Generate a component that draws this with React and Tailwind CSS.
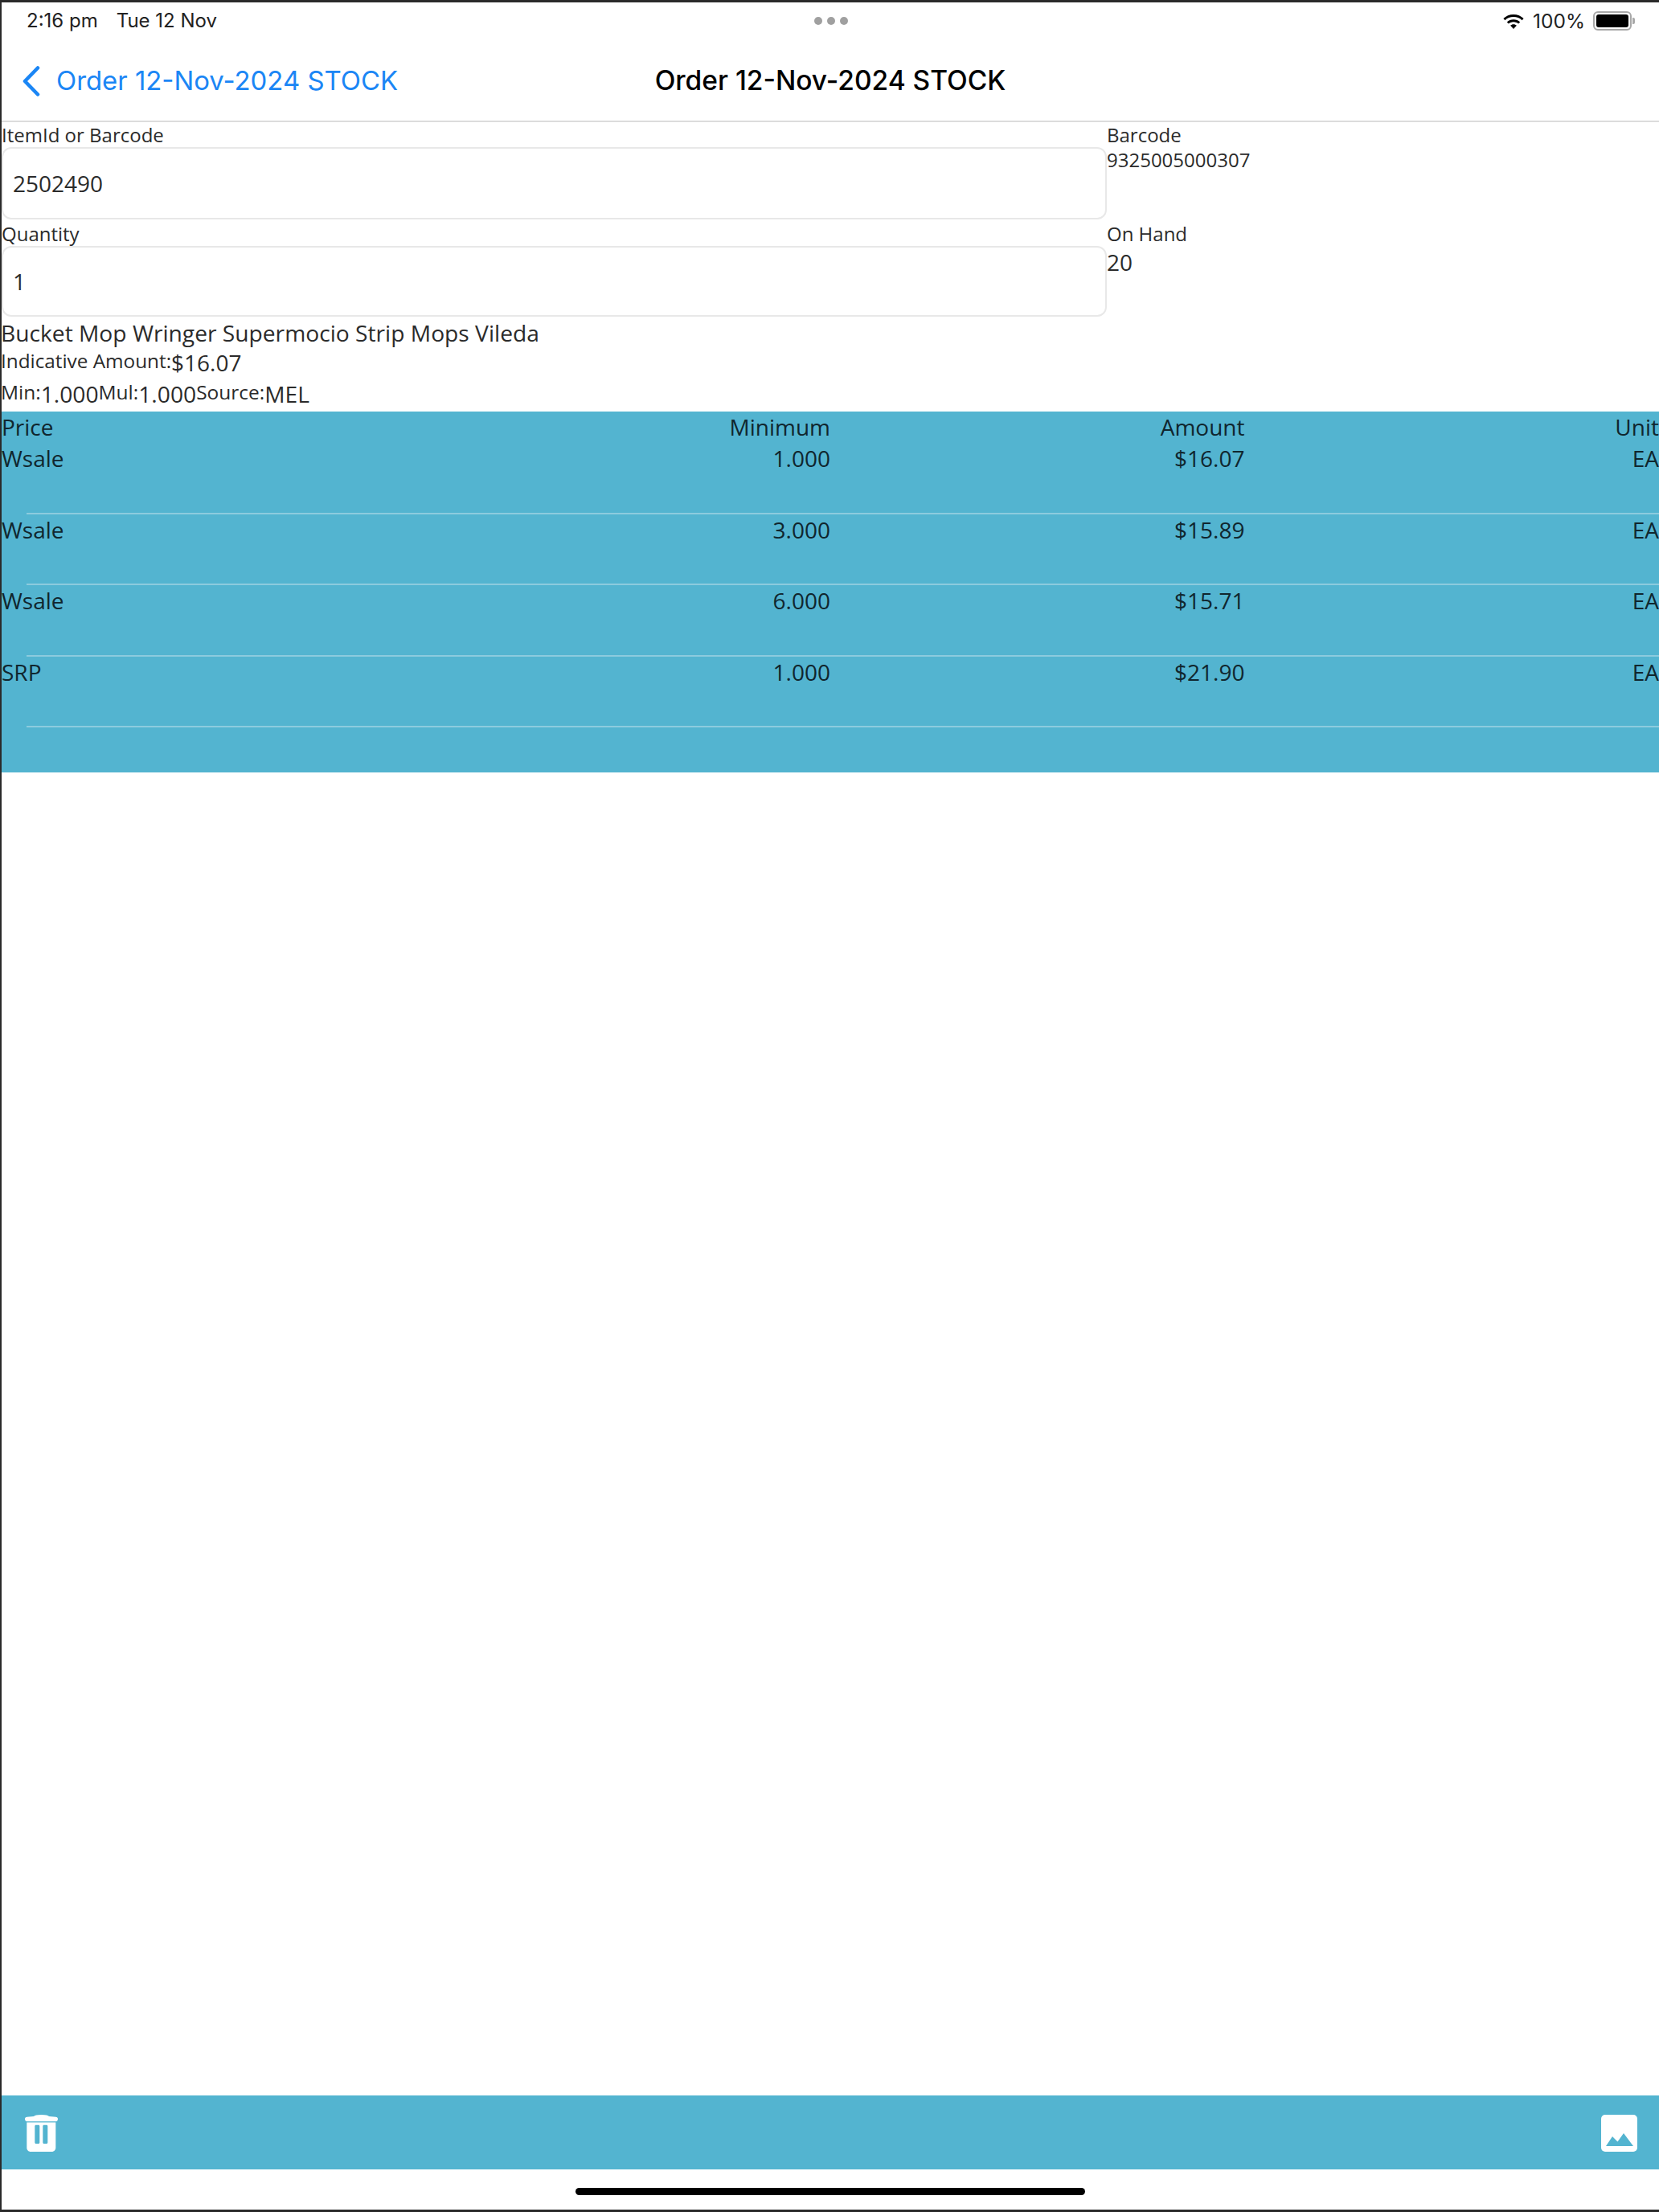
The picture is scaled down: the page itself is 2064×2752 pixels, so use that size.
import React from "react";

const rows = [
  { price: "Wsale", minimum: "1.000", amount: "$16.07", unit: "EA" },
  { price: "Wsale", minimum: "3.000", amount: "$15.89", unit: "EA" },
  { price: "Wsale", minimum: "6.000", amount: "$15.71", unit: "EA" },
  { price: "SRP", minimum: "1.000", amount: "$21.90", unit: "EA" },
];

const WifiIcon = () => (
  <svg width="28" height="22" viewBox="0 0 28 22" fill="#000">
    <path d="M14 3c5 0 9.300 1.900 12.600 5l-2 2.200C21.800 7.600 18.100 6.100 14 6.100S6.200 7.600 3.400 10.200l-2-2.200C4.700 4.900 9 3 14 3z" />
    <path d="M14 9.200c3.200 0 6 1.200 8.200 3.200l-2.100 2.200C18.500 13.200 16.400 12.300 14 12.300s-4.500.9-6.100 2.300l-2.100-2.200C8 10.400 10.800 9.200 14 9.200z" />
    <path d="M14 15.200c1.500 0 2.900.6 3.900 1.500L14 20.900l-3.900-4.200c1-.9 2.400-1.500 3.900-1.500z" />
  </svg>
);

const BatteryIcon = () => (
  <div className="flex items-center">
    <div className="flex h-[24px] w-[48px] items-center justify-center rounded-[6px] border-2 border-[#a8a8a8]">
      <div className="h-[16px] w-[40px] rounded-[3px] bg-black" />
    </div>
    <div className="ml-[1px] h-[8px] w-[3px] rounded-r-[2px] bg-[#a8a8a8]" />
  </div>
);

const BackChevron = () => (
  <svg width="22" height="38" viewBox="0 0 22 38" fill="none">
    <path d="M19 2.500 3 19l16 16.500" stroke="#1b86f5" strokeWidth="4.500" strokeLinecap="round" strokeLinejoin="round" />
  </svg>
);

const TrashIcon = () => (
  <svg width="41" height="46" viewBox="0 0 41 46" fill="#fff">
    <path d="M11 2C12 .7 15 0 20.500 0S29 .7 30 2l8.500.8C40 3 41 3.800 41 5.200S40.200 8 39 8.300H2C.8 8 0 6.600 0 5.200S1 3 2.500 2.800z" />
    <path
      fillRule="evenodd"
      d="M2.300 9.500h36V41c0 2.800-2 5-5 5H7.300c-3 0-5-2.200-5-5zM13.800 12.700c-1 0-1.500.7-1.500 1.500v20.300c0 .8.500 1.500 1.500 1.500h3c1 0 1.500-.7 1.500-1.500V14.200c0-.8-.5-1.500-1.500-1.500zM23.800 12.700c-1 0-1.500.7-1.500 1.500v20.300c0 .8.500 1.500 1.500 1.500h3c1 0 1.500-.7 1.500-1.500V14.200c0-.8-.5-1.500-1.500-1.500z"
    />
  </svg>
);

const ImageIcon = () => (
  <svg width="45" height="46" viewBox="0 0 45 46">
    <rect x="0" y="0" width="45" height="46" rx="5" fill="#fff" />
    <path d="M6 39l8-12 6.500 6.500L28 23 40 39z" fill="#53b4d0" />
  </svg>
);

const App = () => {
  return (
    <div className="flex h-[2752px] w-[2064px] flex-col border-t-[3px] border-b-[3px] border-l-2 border-[#2a2a2a] bg-white font-['Open_Sans',sans-serif] text-[#2b2b2b]">
      {/* Status bar */}
      <div className="grid h-[46px] shrink-0 grid-cols-3 items-center pr-[30px] pl-[31px] font-['Inter',sans-serif] text-[24px] text-[#222]">
        <div className="flex gap-[23px]">
          <span>2:16 pm</span>
          <span>Tue 12 Nov</span>
        </div>
        <div className="flex justify-center gap-[6px]">
          <span className="h-[10px] w-[10px] rounded-full bg-[#a0a0a0]" />
          <span className="h-[10px] w-[10px] rounded-full bg-[#a0a0a0]" />
          <span className="h-[10px] w-[10px] rounded-full bg-[#a0a0a0]" />
        </div>
        <div className="flex items-center justify-end gap-[10px]">
          <WifiIcon />
          <span className="text-[24.500px]">100%</span>
          <BatteryIcon />
        </div>
      </div>

      {/* Nav bar */}
      <div className="relative flex h-[103px] shrink-0 items-center border-b-2 border-[#dcdcdc] pt-[2px] pl-[26px] font-['Inter',sans-serif]">
        <BackChevron />
        <span className="ml-[20px] text-[32.900px] text-[#1b86f5]">Order 12-Nov-2024 STOCK</span>
        <span className="absolute inset-x-0 text-center text-[33.500px] font-medium text-black">Order 12-Nov-2024 STOCK</span>
      </div>

      {/* Item form */}
      <div className="grid shrink-0 grid-cols-[1375px_1fr] text-[24px] leading-[32px]">
        <div>
          <div className="h-[31px]">ItemId or Barcode</div>
          <div className="flex h-[90px] items-center rounded-[12px] border-2 border-[#e8e8e8] pl-[12px] text-[28px]">2502490</div>
        </div>
        <div>
          <div className="h-[31px]">Barcode</div>
          <div>9325005000307</div>
        </div>
        <div>
          <div className="h-[33px] pt-[2px]">Quantity</div>
          <div className="flex h-[88px] items-center rounded-[12px] border-2 border-[#e8e8e8] pl-[12px] text-[28px]">1</div>
        </div>
        <div>
          <div className="h-[33px] pt-[2px]">On Hand</div>
          <div className="text-[28px] leading-[40px]">20</div>
        </div>
      </div>

      {/* Item details */}
      <div className="-ml-[1px] h-[37px] shrink-0 pt-[1px] text-[28.200px] leading-[38px]">Bucket Mop Wringer Supermocio Strip Mops Vileda</div>
      <div className="-ml-[1px] flex h-[39px] shrink-0 items-start text-[24.300px] leading-[36px]">
        <span>Indicative Amount:</span>
        <span className="text-[28px] leading-[40px]">$16.07</span>
      </div>
      <div className="-ml-[1px] flex h-[42px] shrink-0 items-start text-[24.500px] leading-[36px]">
        <span>Min:</span>
        <span className="text-[28.200px] leading-[40px]">1.000</span>
        <span>Mul:</span>
        <span className="text-[28.200px] leading-[40px]">1.000</span>
        <span>Source:</span>
        <span className="text-[28.200px] leading-[40px]">MEL</span>
      </div>

      {/* Price table */}
      <div className="h-[449px] shrink-0 bg-[#53b4d0] text-[28px] leading-[38px] text-[#10262e]">
        <div className="grid h-[39px] grid-cols-4">
          <div>Price</div>
          <div className="text-right">Minimum</div>
          <div className="text-right">Amount</div>
          <div className="text-right">Unit</div>
        </div>
        {rows.map((row, i) => (
          <div key={i} className="relative grid h-[88.500px] grid-cols-4">
            <div>{row.price}</div>
            <div className="text-right">{row.minimum}</div>
            <div className="text-right">{row.amount}</div>
            <div className="text-right">{row.unit}</div>
            <div className="absolute right-0 bottom-0 left-[31px] h-[2px] bg-[#8ccbde]" />
          </div>
        ))}
      </div>

      <div className="flex-1" />

      {/* Bottom toolbar */}
      <div className="flex h-[92px] shrink-0 items-start justify-between bg-[#53b4d0] pt-[24px] pr-[27px] pl-[29px]">
        <TrashIcon />
        <ImageIcon />
      </div>

      {/* Home indicator */}
      <div className="flex h-[50px] shrink-0 justify-center pt-[23px]">
        <div className="h-[9px] w-[634px] rounded-full bg-black" />
      </div>
    </div>
  );
};

export default App;
